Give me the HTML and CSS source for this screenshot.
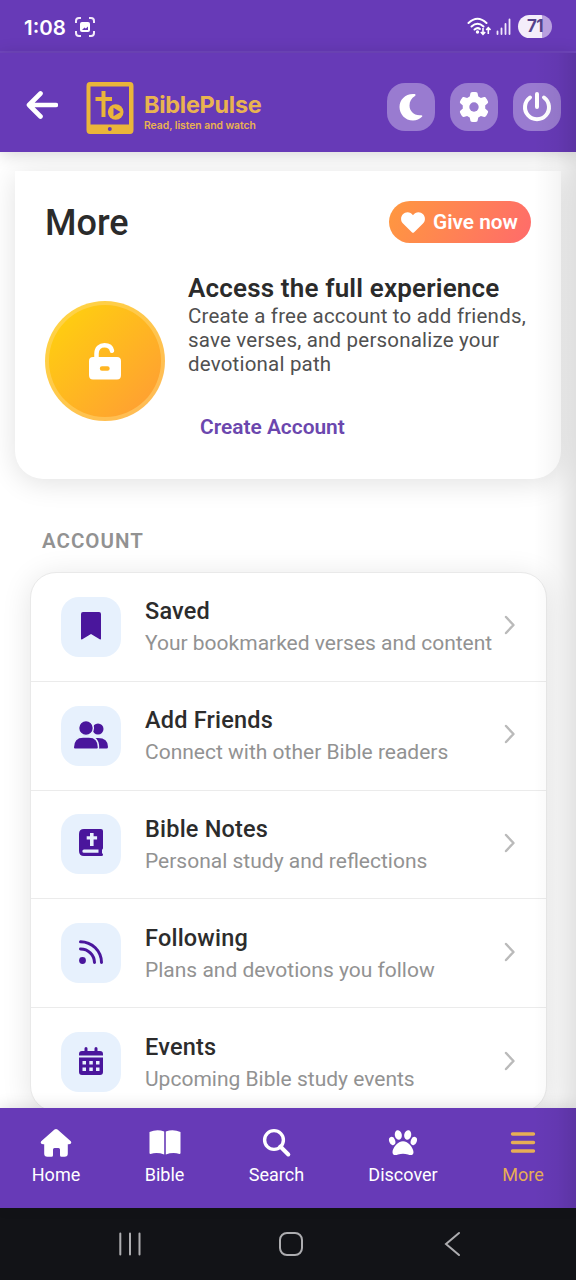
FILE: index.html
```html
<!DOCTYPE html>
<html lang="en">
<head>
<meta charset="utf-8">
<title>BiblePulse</title>
<link rel="stylesheet" href="styles.css">
</head>
<body>
<div class="phone">
  <div class="status">
    <span class="clock">1:08</span>
    <svg class="shot" width="20" height="20" viewBox="0 0 20 20"><path d="M1 6V4a3 3 0 0 1 3-3h2M14 1h2a3 3 0 0 1 3 3v2M19 14v2a3 3 0 0 1-3 3h-2M6 19H4a3 3 0 0 1-3-3v-2" fill="none" stroke="#f3eafa" stroke-width="2"/><rect x="5" y="5" width="10" height="10" rx="2" fill="#fff"/><path d="M7 13l2.500-2.500 1.300 1L13 9.500V13z" fill="#673ab7"/></svg>
    <svg class="wifi" width="24" height="20" viewBox="0 0 24 20"><g fill="none" stroke="#fff" stroke-width="2" stroke-linecap="round"><path d="M1.500 6Q10.500-2.500 19.500 6"/><path d="M4.500 9.500Q10.500 4 16.500 9.500"/><path d="M7.500 12.500Q10.500 10 13 12"/></g><circle cx="10.500" cy="15" r="1.700" fill="#fff"/><path d="M16 11v6M13.800 15l2.200 2.400 2.200-2.400M21.300 17v-6M19.200 13l2.100-2.300 2.200 2.300" fill="none" stroke="#fff" stroke-width="1.600"/></svg>
    <svg class="signal" width="15" height="17" viewBox="0 0 15 17"><path d="M1.500 13.500V16M5.500 10.500V16M9.500 6V16M13.500 1.500V16" stroke="#f0e7fa" stroke-width="1.800" stroke-linecap="round"/></svg>
    <span class="battery">71</span>
  </div>
  <header class="header">
    <svg class="back" width="32" height="28" viewBox="0 0 32 28"><path d="M30 14H3M14.500 2.500L3 14l11.500 11.500" fill="none" stroke="#fff" stroke-width="4.600" stroke-linecap="round" stroke-linejoin="round"/></svg>
    <svg class="logo" width="48" height="52" viewBox="0 0 48 52"><path fill="#eab53a" fill-rule="evenodd" d="M4 0h40q3.500 0 3.500 4v44q0 4-3.500 4H4q-3.500 0-3.500-4V4Q.5 0 4 0zM4.500 4.500v38h38.500v-38zM23.800 45a2 2 0 1 0 0 4 2 2 0 0 0 0-4z"/><path fill="#eab53a" d="M15.500 9h4v6H26v4h-6.500v16h-4V19h-6v-4h6z"/><circle cx="29.700" cy="30" r="8.600" fill="#673ab7"/><circle cx="29.700" cy="30" r="7.800" fill="#eab53a"/><path d="M27.500 25.700v8.600l7-4.300z" fill="#673ab7"/></svg>
    <div class="brand"><span class="brand-name">BiblePulse</span><span class="brand-tag">Read, listen and watch</span></div>
    <div class="tools">
      <span class="tool"><svg width="26" height="28" viewBox="0 0 26 28"><path fill="#fff" d="M15 1C7 1 1.500 7 1.500 14S7 27.500 15 27.500c3.500 0 6.700-1.400 9-3.700.8-.9.200-1.800-1-1.600C16 23 11.500 18 11.500 12.500c0-4 2-7.500 5.500-9.500.9-.6.600-1.700-.3-1.900L15 1z"/></svg></span>
      <span class="tool"><svg width="30" height="32" viewBox="0 0 512 512"><path fill="#fff" d="M495.900 166.600c3.200 8.700.5 18.400-6.400 24.600l-43.300 39.400c1.100 8.300 1.700 16.800 1.700 25.400s-.6 17.100-1.700 25.400l43.300 39.400c6.900 6.200 9.600 15.900 6.400 24.600-4.400 11.900-9.700 23.300-15.800 34.300l-4.700 8.100c-6.600 11-14 21.400-22.100 31.200-5.900 7.200-15.700 9.600-24.500 6.800l-55.700-17.700c-13.400 10.300-28.200 18.900-44 25.400l-12.500 57.100c-2 9.100-9 16.300-18.200 17.800-13.800 2.300-28 3.500-42.500 3.500s-28.700-1.200-42.500-3.500c-9.200-1.500-16.200-8.700-18.200-17.800l-12.500-57.100c-15.800-6.500-30.600-15.100-44-25.400l-55.600 17.800c-8.800 2.800-18.600.3-24.500-6.800-8.100-9.800-15.500-20.200-22.100-31.200l-4.700-8.100c-6.100-11-11.400-22.400-15.800-34.300-3.200-8.700-.5-18.400 6.400-24.600l43.300-39.400c-1.200-8.400-1.800-16.900-1.800-25.500s.6-17.100 1.700-25.400l-43.300-39.400c-6.900-6.200-9.600-15.900-6.400-24.600 4.400-11.900 9.700-23.300 15.800-34.300l4.700-8.100c6.600-11 14-21.400 22.100-31.200 5.900-7.200 15.700-9.600 24.500-6.800l55.700 17.700c13.400-10.300 28.200-18.900 44-25.400l12.500-57.100c2-9.100 9-16.300 18.200-17.800C227.300 1.200 241.500 0 256 0s28.700 1.200 42.500 3.500c9.200 1.500 16.200 8.700 18.200 17.800l12.500 57.100c15.800 6.500 30.600 15.100 44 25.400l55.700-17.700c8.800-2.800 18.600-.3 24.500 6.800 8.100 9.800 15.500 20.200 22.100 31.200l4.700 8.100c6.100 11 11.400 22.400 15.800 34.300z"/><circle cx="256" cy="256" r="80" fill="#997bd0"/></svg></span>
      <span class="tool"><svg width="30" height="32" viewBox="0 0 30 32"><path d="M8 6.500a12 12 0 1 0 14 0M15 3v13" fill="none" stroke="#fff" stroke-width="4" stroke-linecap="round"/></svg></span>
    </div>
  </header>
  <main class="content">
    <section class="card">
      <div class="card-top"><h1>More</h1>
        <span class="give"><svg width="24" height="21" viewBox="0 0 24 21"><path fill="#fff" d="M12 3.200C9.500-.5 4.500-.6 1.900 2.300-.6 5-.5 9 2 11.500l9.100 8.900c.5.500 1.300.5 1.800 0l9.100-8.900c2.500-2.500 2.600-6.500.1-9.200C19.500-.6 14.500-.5 12 3.200z"/></svg>Give now</span></div>
      <div class="card-body">
        <span class="lock"><svg width="32" height="37" viewBox="0 0 32 37"><path d="M7.500 17V10.500C7.500 5 11 2.300 15.500 2.300c3.800 0 6.800 2 7.500 5.500" fill="none" stroke="#fff" stroke-width="4.500" stroke-linecap="round"/><path fill="#fff" fill-rule="evenodd" d="M4 14h24q4 0 4 4v14q0 4.500-4 4.500H4q-4 0-4-4.500V18q0-4 4-4zm9 9.300a2 2 0 0 0 0 4.400h5.500a2 2 0 0 0 0-4.400z"/></svg></span>
        <div class="access"><h2>Access the full experience</h2>
          <p>Create a free account to add friends,<br>save verses, and personalize your<br>devotional path</p>
          <span class="create">Create Account</span></div>
      </div>
    </section>
    <h3>ACCOUNT</h3>
    <section class="list">
      <div class="item"><span class="tile"><svg width="22" height="28" viewBox="0 0 22 28"><path fill="#4a169c" d="M3 0h16q2 0 2 2v24.500q0 1.500-1.300.8L11 22l-8.700 5.300Q1 28 1 26.500V2q0-2 2-2z"/></svg></span><div class="label"><b>Saved</b><span>Your bookmarked verses and content</span></div><svg class="chev" width="12" height="20" viewBox="0 0 12 20"><path d="M2 2l7.500 8L2 18"/></svg></div>
      <div class="item"><span class="tile"><svg width="34" height="28" viewBox="0 0 34 28"><g fill="#4a169c"><circle cx="24" cy="8" r="5.500"/><path d="M21 17h3q10 0 10 9 0 1.500-1.500 1.500H23z"/></g><g fill="#4a169c" stroke="#e7f1fd" stroke-width="1.400"><circle cx="12" cy="7" r="7.400"/><path d="M9 16h6q9.500 0 9.500 10.500 0 1.700-1.600 1.700H1q-1.700 0-1.700-1.700Q-.5 16 9 16z"/></g></svg></span><div class="label"><b>Add Friends</b><span>Connect with other Bible readers</span></div><svg class="chev" width="12" height="20" viewBox="0 0 12 20"><path d="M2 2l7.500 8L2 18"/></svg></div>
      <div class="item"><span class="tile"><svg width="24" height="28" viewBox="0 0 24 28"><path fill="#4a169c" fill-rule="evenodd" d="M5 0h17q2 0 2 2v17q0 1.300-1 1.700v3.500q1 .2 1 1.500T22.500 27H5q-5 0-5-5V5q0-5 5-5zm0 20.500a1.600 1.600 0 0 0 0 3.300h14.500v-3.300zM11 4v3.300H7.700v3.200H11v6.500h3.600v-6.500h3.500V7.300h-3.500V4z"/></svg></span><div class="label"><b>Bible Notes</b><span>Personal study and reflections</span></div><svg class="chev" width="12" height="20" viewBox="0 0 12 20"><path d="M2 2l7.500 8L2 18"/></svg></div>
      <div class="item"><span class="tile"><svg width="24" height="24" viewBox="0 0 24 24"><circle cx="3.500" cy="20.500" r="3.400" fill="#4a169c"/><path d="M1.500 9A13.800 13.800 0 0 1 15.500 22.500M1.500 1.700A21 21 0 0 1 22.500 22.500" fill="none" stroke="#4a169c" stroke-width="3" stroke-linecap="round"/></svg></span><div class="label"><b>Following</b><span>Plans and devotions you follow</span></div><svg class="chev" width="12" height="20" viewBox="0 0 12 20"><path d="M2 2l7.500 8L2 18"/></svg></div>
      <div class="item"><span class="tile"><svg width="24" height="28" viewBox="0 0 24 28"><path fill="#4a169c" fill-rule="evenodd" d="M5.500 1.500a1.500 1.500 0 0 1 3 0V4h7V1.500a1.500 1.500 0 0 1 3 0V4H21q3 0 3 3v1.500H0V7q0-3 3-3h2.500zM0 10.500h24V25q0 3-3 3H3q-3 0-3-3zM3.500 14v3.500H7V14zm6.800 0v3.500h3.500V14zm6.700 0v3.500h3.500V14zM3.500 20.500V24H7v-3.500zm6.800 0V24h3.500v-3.500zm6.700 0V24h3.500v-3.500z"/></svg></span><div class="label"><b>Events</b><span>Upcoming Bible study events</span></div><svg class="chev" width="12" height="20" viewBox="0 0 12 20"><path d="M2 2l7.500 8L2 18"/></svg></div>
    </section>
  </main>
  <nav class="nav">
    <span class="tab home"><svg width="32" height="30" viewBox="0 0 32 30"><path fill="#fff" d="M14.500 1.500Q16 .3 17.500 1.500l13.300 11.800q1.500 2.700-1.800 2.900h-1.200v9.300q0 3.200-3.200 3.200h-3.100q-1.500 0-1.500-1.500v-5.700q0-1.500-1.500-1.500h-4q-1.500 0-1.500 1.500v5.700q0 1.500-1.500 1.500H7.400q-3.200 0-3.200-3.200v-9.300H3q-3.300-.2-1.800-2.900z"/></svg>Home</span>
    <span class="tab bible"><svg width="32" height="30" viewBox="0 0 32 30"><path fill="#fff" d="M.5 4Q8 .8 15.200 3.500v23Q8 24 1.500 26q-1 0-1-1zM16.800 3.500Q24 .8 31.500 4v21q0 1-1 1-6.500-2-13.700.5z"/></svg>Bible</span>
    <span class="tab search"><svg width="32" height="30" viewBox="0 0 32 30"><path d="M19.300 18.500l8 8" stroke="#fff" stroke-width="4" stroke-linecap="round"/><circle cx="13" cy="12" r="9.400" fill="none" stroke="#fff" stroke-width="3.400"/></svg>Search</span>
    <span class="tab discover"><svg width="32" height="30" viewBox="0 0 32 30"><g fill="#fff"><ellipse cx="11.300" cy="7" rx="3.500" ry="4.800" transform="rotate(-12 11.300 7)"/><ellipse cx="20.700" cy="7" rx="3.500" ry="4.800" transform="rotate(12 20.700 7)"/><ellipse cx="5.200" cy="13" rx="3" ry="4.200" transform="rotate(-20 5.200 13)"/><ellipse cx="26.800" cy="13" rx="3" ry="4.200" transform="rotate(20 26.800 13)"/><path d="M16 13.200c5 0 10.500 6.500 10.500 11 0 3.500-3.500 3-5.500 2.200-3.500-1-6.500-1-10 0-2 .8-5.500 1.300-5.500-2.200 0-4.500 5.500-11 10.500-11z"/></g></svg>Discover</span>
    <span class="tab more"><svg width="32" height="30" viewBox="0 0 32 30"><path d="M5.500 6h21M5.500 14.500h21M5.500 23h21" stroke="#e7ae55" stroke-width="3.400" stroke-linecap="round"/></svg>More</span>
  </nav>
  <div class="system">
    <svg width="24" height="24" viewBox="0 0 24 24"><path d="M2.300 1.500v21M12 1.500v21M21.500 1.500v21"/></svg>
    <svg width="26" height="26" viewBox="0 0 26 26"><rect x="2" y="2" width="22" height="22" rx="7"/></svg>
    <svg width="18" height="26" viewBox="0 0 18 26"><path d="M16 2L3 13l13 11"/></svg>
  </div>
  <div class="edge"></div>
</div>
</body>
</html>
```
FILE: styles.css
```css
* { box-sizing: border-box; }
body { margin: 0; font-family: Roboto, "Liberation Sans", sans-serif; }
.phone { position: relative; width: 576px; height: 1280px; display: flex; flex-direction: column; overflow: hidden; background: #fff; }
svg { display: block; flex: none; }
.status { height: 53px; flex: none; background: #673ab7; border-bottom: 2px solid #7046bd; display: flex; align-items: center; padding: 2px 24px 0 24px; color: #fff; }
.clock { font: 600 20.500px Inter, sans-serif; width: 51px; white-space: nowrap; padding-top: 1px; }
.wifi { margin-left: auto; }
.signal { margin: 0 7px 0 5px; }
.battery { width: 34px; height: 23px; border-radius: 12px; background: linear-gradient(90deg, #f4edfa 71%, #b9a0df 71%); color: #55418a; font: 700 17px/23px Inter, sans-serif; text-align: center; letter-spacing: -.6px; }
.header { height: 99px; flex: none; background: #673ab7; display: flex; align-items: center; padding: 8px 15px 0 26px; box-shadow: 0 2px 16px rgba(0,0,0,.17); z-index: 2; }
.back { margin-top: -3px; }
.logo { margin-left: 28px; margin-top: 2px; }
.brand { margin: 10px 0 0 10px; display: flex; flex-direction: column; color: #e9b350; font-family: Inter, sans-serif; white-space: nowrap; }
.brand-name { font-size: 23.500px; font-weight: 700; line-height: 27px; letter-spacing: -.3px; }
.brand-tag { font-size: 10.400px; font-weight: 600; line-height: 15px; letter-spacing: -.05px; }
.tools { margin-left: auto; display: flex; gap: 15px; }
.tool { width: 48px; height: 48px; border-radius: 18px; background: #997bd0; display: grid; place-items: center; }
.content { height: 956px; flex: none; overflow: hidden; padding-top: 19px; }
.card { width: 546px; height: 308px; margin-left: 15px; background: #fff; border-radius: 0 0 28px 28px; box-shadow: 0 4px 28px rgba(0,0,0,.12); padding: 30px 30px 0; }
.card-top { display: flex; justify-content: space-between; align-items: center; height: 42px; }
h1, h2, h3, p { margin: 0; }
h1 { font-size: 36px; font-weight: 500; color: #2b2b2b; padding-top: 2px; }
.give { width: 142px; height: 42px; border-radius: 21px; background: linear-gradient(115deg, #ff983f, #ff6b6b); color: #fff; display: flex; align-items: center; gap: 8px; padding-left: 12px; font-size: 20.800px; font-weight: 600; white-space: nowrap; }
.card-body { display: flex; align-items: flex-start; padding-top: 30px; }
.lock { width: 120px; height: 120px; margin-top: 28px; flex: none; border-radius: 50%; background: linear-gradient(135deg, #ffd60a, #ff9838) border-box; border: 4px solid rgba(255,215,120,.5); display: grid; place-items: center; }
.access { margin-left: 23px; white-space: nowrap; }
h2 { font-size: 26px; line-height: 31px; font-weight: 600; color: #2b2b2b; letter-spacing: .17px; }
p { font-size: 20.500px; line-height: 24px; color: #505050; letter-spacing: .2px; }
.create { display: block; margin: 39px 0 0 12px; font-size: 20.900px; line-height: 24px; font-weight: 600; color: #6b47ae; }
h3 { margin: 50px 0 0 42px; font-size: 20.500px; line-height: 25px; font-weight: 600; color: #929292; letter-spacing: 1px; }
.list { margin: 18px 0 0 30px; width: 517px; background: #fff; border: 1px solid #e9e9e9; border-radius: 26px; box-shadow: 0 4px 30px rgba(0,0,0,.11); height: 540px; overflow: hidden; }
.item { height: 108.800px; display: flex; align-items: center; padding: 0 30px; border-bottom: 1px solid #ebebeb; }
.item:last-child { border-bottom: 0; height: 107.800px; }
.tile { width: 60px; height: 60px; flex: none; border-radius: 18px; background: #e7f1fd; display: grid; place-items: center; }
.tile svg { position: relative; top: -1px; }
.label { margin: 1px 0 0 24px; display: flex; flex-direction: column; white-space: nowrap; width: 358px; }
.label b { font-size: 23.500px; line-height: 32px; font-weight: 550; color: #2c2c2c; letter-spacing: .2px; }
.label span { font-size: 21px; line-height: 32px; color: #929292; }
.chev { margin-top: -3px; margin-left: 1px; fill: none; stroke: #bababa; stroke-width: 2.400; stroke-linecap: round; stroke-linejoin: round; }
.nav { height: 100px; flex: none; background: #673ab7; display: flex; padding: 20px 0 0; box-shadow: 0 -2px 14px rgba(0,0,0,.12); color: #fff; z-index: 2; }
.tab { display: flex; flex-direction: column; align-items: center; font-size: 18px; line-height: 26px; gap: 4px; }
.home { width: 112px; } .bible { width: 105px; } .search { width: 119px; } .discover { width: 134px; } .more { width: 106px; color: #e7ae55; }
.system { height: 72px; flex: none; background: #121317; display: flex; align-items: center; justify-content: space-between; padding: 0 115px 0 118px; }
.system svg { fill: none; stroke: #adadb0; stroke-width: 2; stroke-linecap: round; }
.system svg:nth-child(2) { margin-left: -4px; }
.edge { position: absolute; z-index: 5; right: 0; top: 53px; width: 42px; height: 1155px; background: linear-gradient(90deg, rgba(0,0,0,0), rgba(0,0,0,.035) 55%, rgba(0,0,0,.11)); }
```
